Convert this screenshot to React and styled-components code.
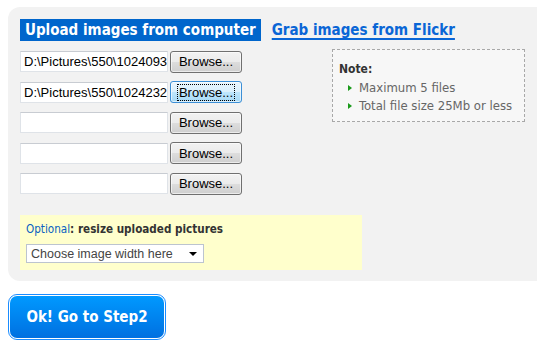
import React from 'react';
import styled, { createGlobalStyle } from 'styled-components';

const GlobalStyle = createGlobalStyle`
  html, body {
    margin: 0;
    padding: 0;
    background: #fff;
  }
  body {
    font-family: "DejaVu Sans Condensed", "DejaVu Sans", sans-serif;
  }
`;

const Page = styled.div`
  width: 537px;
  height: 346px;
  overflow: hidden;
  padding: 7px 0 0 8px;
  box-sizing: border-box;
`;

const Panel = styled.div`
  background: #f2f2f2;
  border-radius: 12px 0 0 12px;
  padding: 12px 0 12px 12px;
  height: 274px;
  box-sizing: border-box;
`;

const Tabs = styled.div`
  display: flex;
  align-items: center;
  gap: 6px;
  height: 22px;
`;

const Tab = styled.a`
  font-size: 15px;
  font-weight: bold;
  line-height: 22px;
  padding: 0 5px;
  color: ${p => (p.$active ? '#fff' : '#0a66d6')};
  background: ${p => (p.$active ? '#0066cc' : 'transparent')};
  text-decoration: ${p => (p.$active ? 'none' : 'underline')};
  text-decoration-thickness: 2px;
  text-underline-offset: 3px;
  cursor: pointer;
`;

const Body = styled.div`
  display: flex;
  margin-top: 9px;
`;

const Files = styled.div`
  display: flex;
  flex-direction: column;
  gap: 7.5px;
  width: 312px;
`;

const FileRow = styled.div`
  display: flex;
  align-items: center;
  gap: 2px;
  height: 23px;
`;

const PathField = styled.div`
  width: 148px;
  height: 21px;
  box-sizing: border-box;
  background: #fff;
  border: 1px solid #dfe3e8;
  border-top-color: #c8ccd2;
  font-family: "Liberation Sans", Arial, sans-serif;
  font-size: 13px;
  line-height: 19px;
  padding-left: 3px;
  white-space: nowrap;
  overflow: hidden;
  color: #000;
`;

const BrowseButton = styled.button`
  width: 72px;
  height: 22px;
  box-sizing: border-box;
  border: 1px solid ${p => (p.$focused ? '#3c8fd6' : '#707070')};
  border-radius: 3px;
  background: ${p =>
    p.$focused
      ? 'linear-gradient(#e9f5fd 0%, #d9effc 50%, #bee6fd 51%, #a7d9f5 100%)'
      : 'linear-gradient(#f2f2f2 0%, #ebebeb 50%, #dddddd 51%, #cfcfcf 100%)'};
  box-shadow: inset 0 0 0 1px rgba(255, 255, 255, 0.6);
  font-family: "Liberation Sans", Arial, sans-serif;
  font-size: 13px;
  color: #000;
  padding: 0;
  display: flex;
  align-items: center;
  justify-content: center;

  span {
    padding: 0 1px;
    outline: ${p => (p.$focused ? '1px dotted #000' : 'none')};
    line-height: 15px;
  }
`;

const Note = styled.div`
  width: 193px;
  height: 73px;
  margin-top: -1px;
  box-sizing: border-box;
  border: 1px dashed #a8a8a8;
  background: #f7f7f7;
  padding: 11px 6px 0;
  font-size: 12px;
`;

const NoteTitle = styled.div`
  font-weight: bold;
  color: #333;
  line-height: 16px;
`;

const NoteList = styled.ul`
  list-style: none;
  margin: 2px 0 0;
  padding: 0 0 0 9px;

  li {
    display: flex;
    align-items: center;
    gap: 7px;
    line-height: 18px;
    font-size: 13px;
    color: #666;
  }
`;

const Bullet = styled.span`
  width: 0;
  height: 0;
  border-top: 3px solid transparent;
  border-bottom: 3px solid transparent;
  border-left: 4px solid #1a9a1a;
`;

const Optional = styled.div`
  width: 342px;
  height: 55px;
  box-sizing: border-box;
  background: #ffffcc;
  margin-top: 20px;
  padding: 6px 6px 0;
`;

const OptionalLabel = styled.div`
  font-size: 11.6px;
  font-weight: bold;
  color: #333;
  line-height: 16px;

  em {
    font-style: normal;
    font-weight: normal;
    color: #0a5fc2;
  }
`;

const Select = styled.div`
  margin-top: 7px;
  width: 178px;
  height: 19px;
  box-sizing: border-box;
  background: #fff;
  border: 1px solid #bcc4cf;
  display: flex;
  align-items: center;
  justify-content: space-between;
  padding: 0 6px 0 4px;
  font-family: "Liberation Sans", Arial, sans-serif;
  font-size: 12.5px;
  color: #444;
`;

const Caret = styled.span`
  width: 0;
  height: 0;
  border-left: 4px solid transparent;
  border-right: 4px solid transparent;
  border-top: 4px solid #000;
`;

const Footer = styled.div`
  padding-top: 13px;
`;

const StepButton = styled.button`
  width: 158px;
  height: 46px;
  box-sizing: border-box;
  border: 1px solid #1a8cff;
  border-radius: 9px;
  padding: 1px;
  background: #fff;
  cursor: pointer;

  span {
    display: flex;
    align-items: center;
    justify-content: center;
    height: 100%;
    border-radius: 7px;
    background: linear-gradient(#0099ff, #0070e0);
    color: #fff;
    font-family: "DejaVu Sans Condensed", "DejaVu Sans", sans-serif;
    font-size: 15px;
    font-weight: bold;
  }
`;

const files = ['D:\\Pictures\\550\\1024093', 'D:\\Pictures\\550\\1024232', '', '', ''];

export default function App() {
  return (
    <Page>
      <GlobalStyle />
      <Panel>
        <Tabs>
          <Tab $active>Upload images from computer</Tab>
          <Tab>Grab images from Flickr</Tab>
        </Tabs>
        <Body>
          <Files>
            {files.map((f, i) => (
              <FileRow key={i}>
                <PathField>{f}</PathField>
                <BrowseButton $focused={i === 1}>
                  <span>Browse...</span>
                </BrowseButton>
              </FileRow>
            ))}
          </Files>
          <Note>
            <NoteTitle>Note:</NoteTitle>
            <NoteList>
              <li><Bullet />Maximum 5 files</li>
              <li><Bullet />Total file size 25Mb or less</li>
            </NoteList>
          </Note>
        </Body>
        <Optional>
          <OptionalLabel>
            <em>Optional</em>: resize uploaded pictures
          </OptionalLabel>
          <Select>
            Choose image width here
            <Caret />
          </Select>
        </Optional>
      </Panel>
      <Footer>
        <StepButton>
          <span>Ok! Go to Step2</span>
        </StepButton>
      </Footer>
    </Page>
  );
}
